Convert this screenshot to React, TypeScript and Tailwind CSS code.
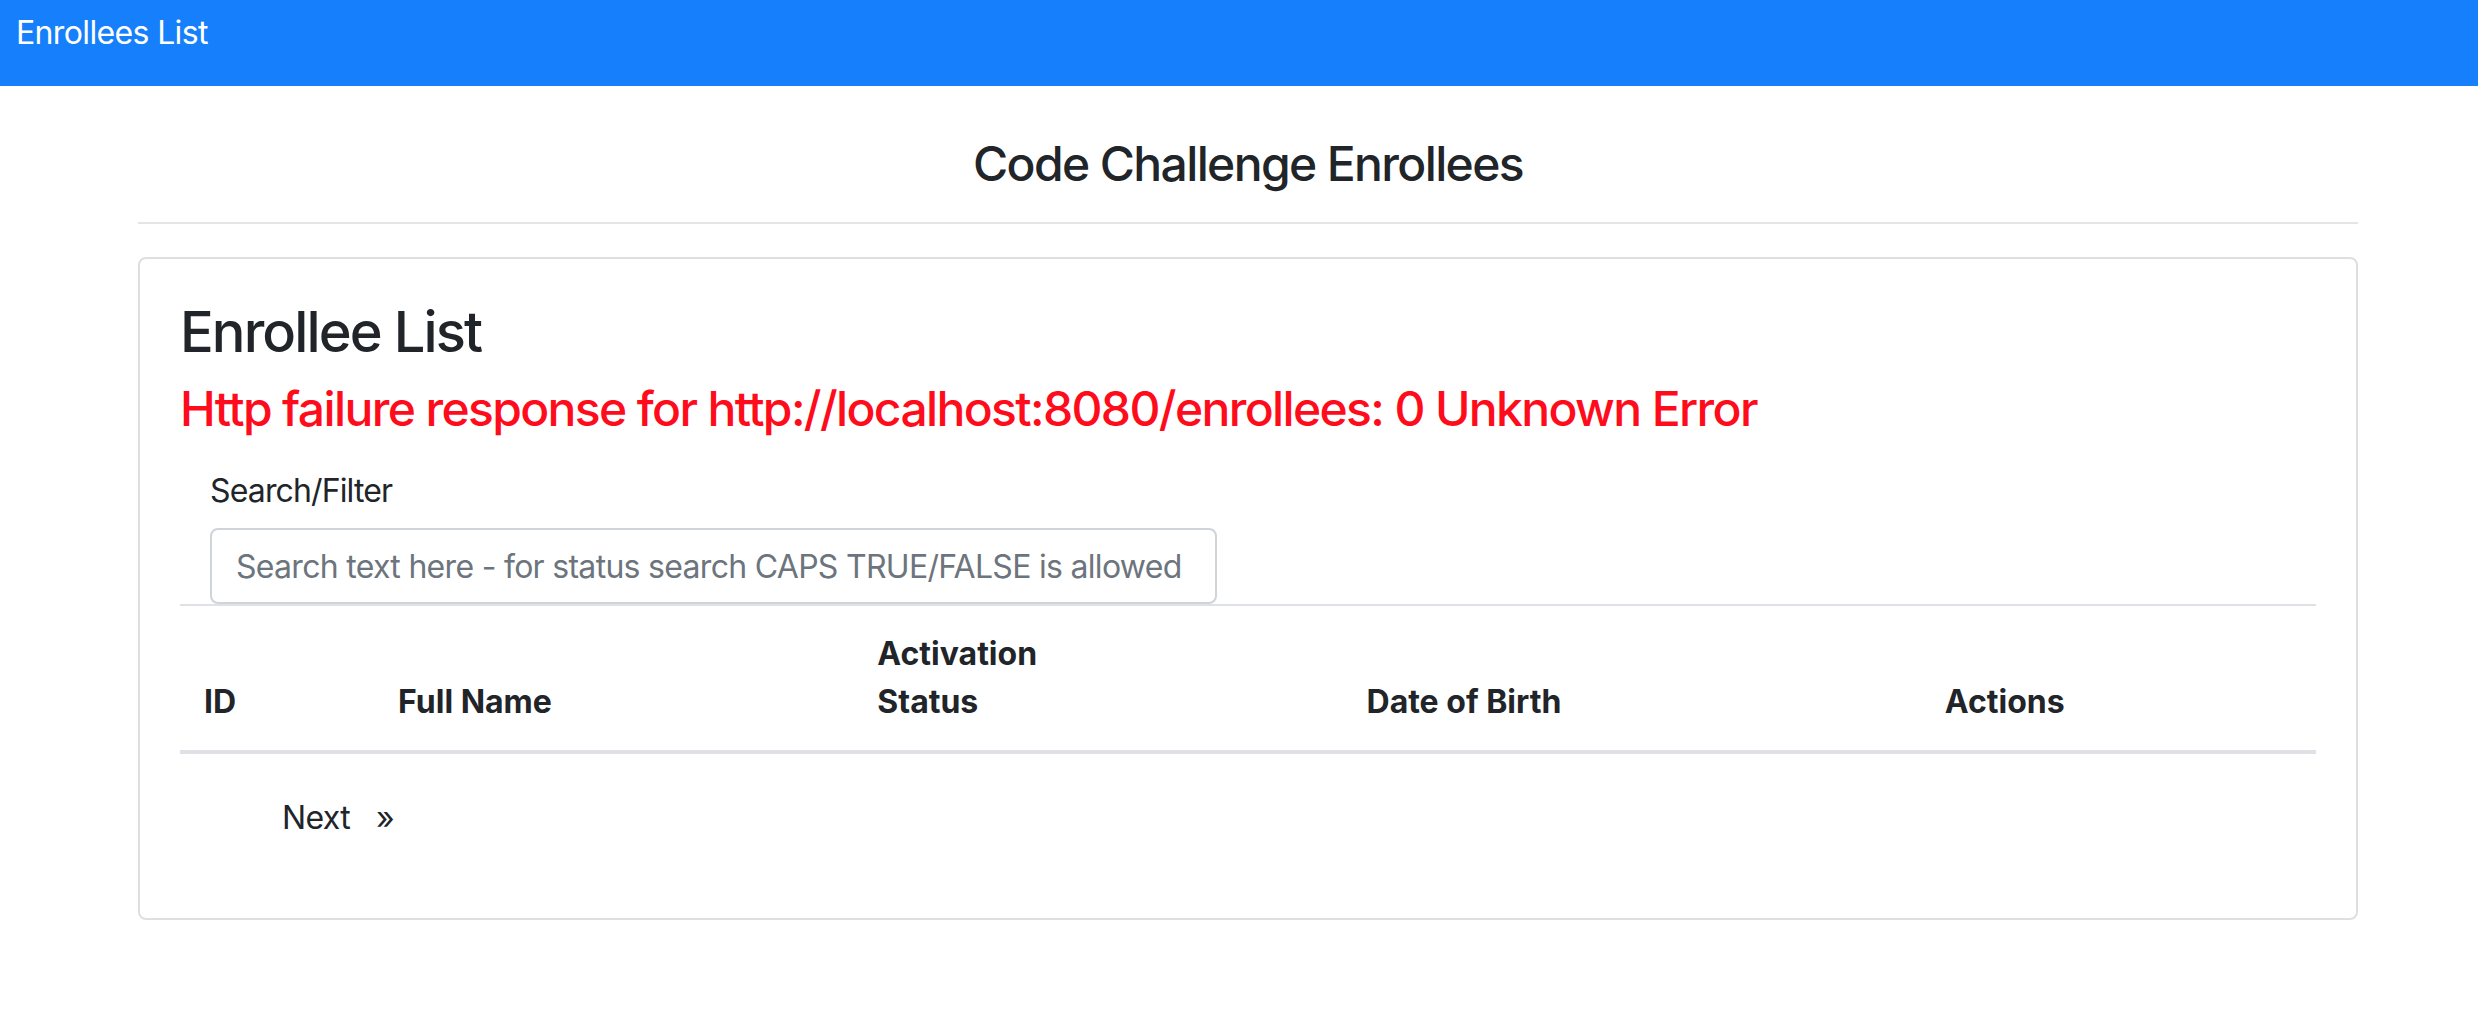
const columns = [
  { label: "ID", width: "w-[194px]" },
  { label: "Full Name", width: "w-[479px]" },
  { label: "Activation Status", width: "w-[489px]" },
  { label: "Date of Birth", width: "w-[578px]" },
  { label: "Actions", width: "w-[395px]" },
];

export default function App() {
  return (
    <div className="min-h-screen bg-white font-['Inter','Liberation_Sans',sans-serif] text-[#212529]">
      <nav className="h-[86px] bg-[#167ffc] px-[16px] pt-[9px]">
        <span className="text-[32px] leading-[48px] tracking-[-0.02em] text-white">Enrollees List</span>
      </nav>

      <div className="ml-[138px] w-[2220px]">
        <h4 className="mt-[49px] text-center text-[48px] font-medium leading-[57.6px] tracking-[-0.034em]">
          Code Challenge Enrollees
        </h4>
        <hr className="mt-[29px] border-t-2 border-[#e5e5e5]" />

        <div className="mt-[33px] rounded-[8px] border-2 border-[#dfdfdf] px-[40px] pt-[40px] pb-[76px]">
          <h3 className="text-[56px] font-medium leading-[67.2px] tracking-[-0.034em]">Enrollee List</h3>
          <h4 className="mt-[14px] text-[48px] font-medium leading-[57.6px] tracking-[-0.034em] text-[#fe0c1c]">
            Http failure response for http://localhost:8080/enrollees: 0 Unknown Error
          </h4>

          <div className="mt-[30px] pl-[30px]">
            <label className="block text-[32px] leading-[48px] tracking-[-0.027em]">Search/Filter</label>
            <input
              type="text"
              placeholder="Search text here - for status search CAPS TRUE/FALSE is allowed"
              className="mt-[13px] block h-[76px] w-[1007px] rounded-[8px] border-2 border-[#ced4da] px-[24px] text-[32px] leading-[48px] tracking-[-0.022em] placeholder:text-[#6c757d] outline-none"
            />
          </div>

          <table className="w-full table-fixed border-collapse">
            <thead>
              <tr className="border-t-2 border-b-4 border-[#dee2e6]">
                {columns.map((c) => (
                  <th
                    key={c.label}
                    className={`${c.width} px-[24px] py-[24px] text-left align-bottom text-[32px] font-bold leading-[48px]`}
                  >
                    {c.label === "Activation Status" ? (
                      <>
                        Activation
                        <br />
                        Status
                      </>
                    ) : (
                      c.label
                    )}
                  </th>
                ))}
              </tr>
            </thead>
            <tbody></tbody>
          </table>

          <div className="mt-[40px] flex pl-[102px] text-[32px] leading-[48px] tracking-[-0.02em]">
            <span>Next</span>
            <span className="ml-[26px]">»</span>
          </div>
        </div>
      </div>
    </div>
  );
}
